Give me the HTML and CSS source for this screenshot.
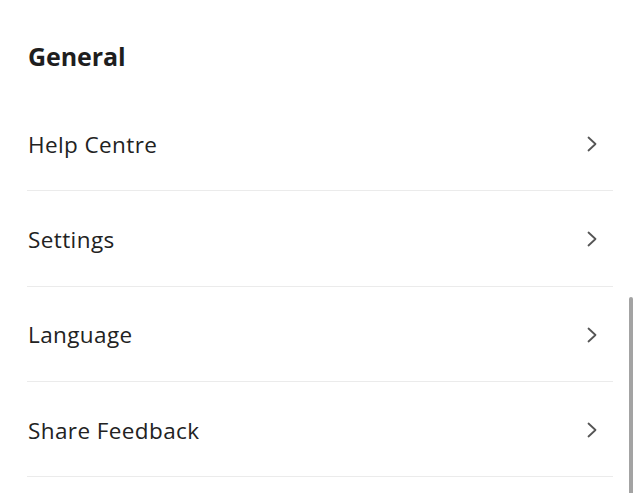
FILE: index.html
```html
<!DOCTYPE html>
<html lang="en">
<head>
<meta charset="utf-8">
<link rel="stylesheet" href="styles.css">
</head>
<body>
<main class="page">
  <h1 class="section-title">General</h1>
  <ul class="menu">
    <li class="menu-item"><span class="label">Help Centre</span><svg class="chev" viewBox="0 0 10 16" width="10" height="16"><path d="M1.5 1.5 L8.5 8 L1.5 14.5"/></svg></li>
    <li class="menu-item"><span class="label">Settings</span><svg class="chev" viewBox="0 0 10 16" width="10" height="16"><path d="M1.5 1.5 L8.5 8 L1.5 14.5"/></svg></li>
    <li class="menu-item"><span class="label">Language</span><svg class="chev" viewBox="0 0 10 16" width="10" height="16"><path d="M1.5 1.5 L8.5 8 L1.5 14.5"/></svg></li>
    <li class="menu-item"><span class="label">Share Feedback</span><svg class="chev" viewBox="0 0 10 16" width="10" height="16"><path d="M1.5 1.5 L8.5 8 L1.5 14.5"/></svg></li>
  </ul>
</main>
<div class="scrollbar"></div>
</body>
</html>
```

FILE: styles.css
```css
html, body {
  margin: 0;
  padding: 0;
  background: #ffffff;
  height: 100%;
  overflow: hidden;
}
body {
  font-family: "Open Sans", "Noto Sans", sans-serif;
  color: #222222;
}
.page {
  padding: 0 27px;
}
.section-title {
  margin: 0;
  height: 96px;
  box-sizing: border-box;
  padding: 16px 0 0 1px;
  display: flex;
  align-items: center;
  font-size: 25px;
  font-weight: 700;
  color: #1e1e1e;
  letter-spacing: -0.1px;
}
.menu {
  list-style: none;
  margin: 0;
  padding: 0;
}
.menu-item {
  height: 95.3px;
  box-sizing: border-box;
  border-bottom: 1px solid #ebebeb;
  display: flex;
  align-items: center;
  justify-content: space-between;
  padding: 2px 16px 0 1px;
}
.label {
  font-size: 22.5px;
  color: #222222;
  letter-spacing: 0.4px;
}
.chev {
  fill: none;
  stroke: #555555;
  stroke-width: 1.8;
  stroke-linecap: round;
  stroke-linejoin: round;
}
.scrollbar {
  position: absolute;
  right: 7px;
  top: 297px;
  bottom: 0;
  width: 4px;
  border-radius: 2px 2px 0 0;
  background: #a3a3a3;
}
```
